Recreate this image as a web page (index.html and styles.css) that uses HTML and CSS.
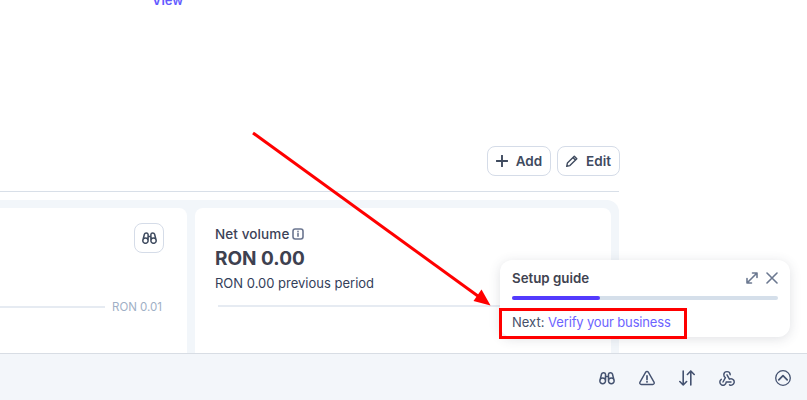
FILE: index.html
```html
<!DOCTYPE html>
<html lang="en">
<head>
  <meta charset="UTF-8">
  <title>Dashboard</title>
  <link rel="stylesheet" href="styles.css">
</head>
<body>
  <div class="page">
    <main class="main">
      <a class="view-link">View</a>

      <div class="toolbar">
        <button class="btn">
          <svg class="btn-icon" viewBox="0 0 12 12"><path d="M6 .5v11M.5 6h11" stroke-width="1.9"/></svg>
          Add
        </button>
        <button class="btn">
          <svg class="btn-icon" viewBox="0 0 12 12"><path d="M8.3 1.2l2.5 2.5-6.9 6.9-3.2.7.7-3.2zM6.9 2.6l2.5 2.5" stroke-width="1.4"/></svg>
          Edit
        </button>
      </div>

      <div class="cards">
        <section class="card card-left">
          <button class="icon-btn">
            <svg class="binoculars" viewBox="0.5 0 15 12"><path d="M1.3 8.5L2.9 2.2C3.4.6 6.3.6 6.6 2.4v6.2M14.7 8.5l-1.6-6.3C12.6.6 9.7.6 9.4 2.4v6.2M6.6 4.5h2.8M6.6 8.7a2.65 2.65 0 1 1-5.3 0 2.65 2.65 0 0 1 5.3 0zM14.7 8.7a2.65 2.65 0 1 1-5.3 0 2.65 2.65 0 0 1 5.3 0z" stroke-width="1.5"/></svg>
          </button>
          <div class="axis-row">
            <span class="axis-line"></span>
            <span class="axis-label">RON 0.01</span>
          </div>
        </section>

        <section class="card card-right">
          <h3 class="card-title">
            Net volume
            <svg class="info" viewBox="0 0 12 12"><rect x="1" y="1" width="10" height="10" rx="2.2" stroke-width="1.6"/><path d="M6 5.6v2.6M6 3.4v.4" stroke-width="1.6"/></svg>
          </h3>
          <div class="amount">RON 0.00</div>
          <div class="previous">RON 0.00 previous period</div>
          <div class="chart-line"></div>
        </section>
      </div>
    </main>

    <footer class="bottom-bar">
      <svg class="bar-icon" viewBox="0.5 -1 15 14"><path d="M1.3 8.5L2.9 2.2C3.4.6 6.3.6 6.6 2.4v6.2M14.7 8.5l-1.6-6.3C12.6.6 9.7.6 9.4 2.4v6.2M6.6 4.5h2.8M6.6 8.7a2.65 2.65 0 1 1-5.3 0 2.65 2.65 0 0 1 5.3 0zM14.7 8.7a2.65 2.65 0 1 1-5.3 0 2.65 2.65 0 0 1 5.3 0z" stroke-width="1.4"/></svg>
      <svg class="bar-icon" viewBox="0 0 16 16"><path d="M6.7 2.2L1 12.2c-.6 1.1.1 2.3 1.3 2.3h11.4c1.2 0 1.9-1.2 1.3-2.3L9.3 2.2c-.6-1-2-1-2.6 0z" stroke-width="1.4"/><path d="M8 5.8v3.6M8 11.6v.3" stroke-width="1.7"/></svg>
      <svg class="bar-icon" viewBox="0 0 16 16"><path d="M4.2 1v14M.8 11.5l3.4 3.5 3.4-3.5M11.8 15V1M8.4 4.5L11.8 1l3.4 3.5" stroke-width="1.6"/></svg>
      <svg class="bar-icon" viewBox="2 2 20 20"><path d="M4.876 13.61a4 4 0 1 0 6.124 3.39h6M15.066 20.502a4 4 0 1 0 1.934 -7.502c-.706 0 -1.424 .179 -2 .5l-3 -5.5M16 8a4 4 0 1 0 -8 0c0 1.506 .77 2.818 2 3.5l-3 5.5" stroke-width="1.8"/></svg>
      <svg class="bar-icon bar-icon-up" viewBox="0 0 16 16"><circle cx="8" cy="8" r="7.3" stroke-width="1.3"/><path d="M3.8 9.8L8 5.6l4.2 4.2" stroke-width="1.7"/></svg>
    </footer>
  </div>

  <!-- setup guide popup -->
  <aside class="guide">
    <div class="guide-head">
      <span class="guide-title">Setup guide</span>
      <div class="guide-actions">
        <svg class="guide-icon" viewBox="0 0 12 12"><path d="M1 11L11 1M6.5 1H11v4.5M1 6.5V11h4.5" stroke-width="1.6"/></svg>
        <svg class="guide-icon" viewBox="0 0 12 12"><path d="M1 1l10 10M11 1L1 11" stroke-width="1.6"/></svg>
      </div>
    </div>
    <div class="progress"><div class="progress-fill"></div></div>
    <div class="guide-next">Next: <a class="guide-link">Verify your business</a></div>
  </aside>

  <!-- annotation -->
  <svg class="arrow" viewBox="0 0 807 400"><path class="arrow-line" d="M253 133L482 299"/><path class="arrow-head" d="M490.5 305.5L473.5 301 481.5 289.5z"/></svg>
  <div class="red-box"></div>
</body>
</html>
```

FILE: styles.css
```css
* {
  box-sizing: border-box;
}

html, body {
  margin: 0;
  height: 400px;
  overflow: hidden;
}

body {
  font-family: Inter, "Noto Sans", sans-serif;
  background-color: #fff;
  color: #3c4257;
}

svg {
  fill: none;
  stroke: currentColor;
  stroke-linecap: round;
  stroke-linejoin: round;
}

.page {
  height: 400px;
  display: flex;
  flex-direction: column;
}

.main {
  flex: 1;
  min-height: 0;
  overflow: hidden;
  width: 620px;
}

.view-link {
  display: block;
  margin-top: -8px;
  margin-left: 152px;
  height: 154px;
  color: #635bff;
  font-size: 13px;
  line-height: 16px;
  font-weight: 600;
}

/* toolbar */
.toolbar {
  display: flex;
  justify-content: flex-end;
  gap: 6px;
  height: 46px;
  border-bottom: 1px solid #d8dfe8;
  margin-right: 1px;
}

.btn {
  display: flex;
  align-items: center;
  gap: 8px;
  height: 30px;
  padding: 0 8px;
  background-color: #fff;
  border: 1px solid #d5dce8;
  border-radius: 8px;
  color: #3f4b5f;
  font-family: inherit;
  font-size: 13.5px;
  font-weight: 600;
}

.btn:last-child {
  margin-right: -1px;
}

.btn-icon {
  width: 12px;
  height: 12px;
}

/* cards */
.cards {
  display: flex;
  gap: 8px;
  margin-top: 8px;
  margin-right: 1px;
  height: 160px;
  padding: 8px 8px 0 0;
  background-color: #f2f6fa;
  border-radius: 0 12px 0 0;
}

.card {
  background-color: #fff;
  border-radius: 8px 8px 0 0;
}

.card-left {
  width: 187px;
  padding: 15px 23px 0 0;
  border-top-left-radius: 0;
}

.icon-btn {
  display: flex;
  align-items: center;
  justify-content: center;
  width: 30px;
  height: 30px;
  margin-left: auto;
  padding: 0;
  background-color: #fff;
  border: 1px solid #d5dce8;
  border-radius: 8px;
  color: #3f4b5f;
}

.binoculars {
  width: 15px;
  height: 12px;
}

.axis-row {
  display: flex;
  align-items: center;
  gap: 7px;
  margin-top: 46px;
  margin-right: 2px;
}

.axis-line {
  flex: 1;
  height: 2px;
  background-color: #e6ebf2;
}

.axis-label {
  color: #9fb0c6;
  font-size: 11.5px;
  line-height: 16px;
}

.card-right {
  flex: 1;
  padding: 18px 20px 0;
}

.card-title {
  display: flex;
  align-items: center;
  gap: 3px;
  margin: 0;
  font-size: 13.5px;
  letter-spacing: 0.1px;
  line-height: 16px;
  font-weight: 500;
  color: #3c4257;
}

.info {
  width: 12px;
  height: 12px;
  color: #6b7690;
}

.amount {
  margin-top: 4px;
  font-size: 19px;
  line-height: 26px;
  font-weight: 700;
  color: #3e4150;
}

.previous {
  margin-top: 2px;
  font-size: 13px;
  line-height: 18px;
  color: #34405a;
}

.chart-line {
  height: 2px;
  margin-top: 13px;
  margin-left: 3px;
  background-color: #e6ebf2;
}

/* bottom bar */
.bottom-bar {
  display: flex;
  align-items: center;
  justify-content: flex-end;
  gap: 24px;
  height: 47px;
  padding: 2px 16px 0 0;
  background-color: #f3f6fa;
  border-top: 1px solid #d8dde4;
  color: #445270;
}

.bar-icon {
  width: 16px;
  height: 16px;
}

.bar-icon-up {
  margin-left: 16px;
}

/* setup guide */
.guide {
  position: absolute;
  left: 500px;
  top: 260px;
  width: 290px;
  height: 77px;
  padding: 10px 12px;
  background-color: #fff;
  border-radius: 12px;
  box-shadow: 0 2px 12px rgba(60, 66, 87, 0.16);
}

.guide-head {
  display: flex;
  align-items: center;
  justify-content: space-between;
  height: 16px;
}

.guide-title {
  font-size: 13.3px;
  font-weight: 600;
  color: #3f4350;
}

.guide-actions {
  display: flex;
  gap: 8px;
  color: #6b7890;
}

.guide-icon {
  width: 12px;
  height: 12px;
}

.progress {
  height: 4px;
  margin-top: 10px;
  border-radius: 2px;
  background-color: #d5dfea;
}

.progress-fill {
  width: 33%;
  height: 100%;
  border-radius: 2px;
  background-color: #533afd;
}

.guide-next {
  margin-top: 14px;
  font-size: 13px;
  line-height: 16px;
  color: #46506a;
}

.guide-link {
  color: #6c63ff;
  letter-spacing: -0.15px;
}

/* red annotation */
.arrow {
  position: absolute;
  left: 0;
  top: 0;
  width: 807px;
  height: 400px;
  pointer-events: none;
}

.arrow-line {
  stroke: #ff0000;
  stroke-width: 3;
  stroke-linecap: butt;
}

.arrow-head {
  fill: #ff0000;
  stroke: none;
}

.red-box {
  position: absolute;
  left: 499px;
  top: 308px;
  width: 188px;
  height: 31px;
  border: 3px solid #ff0000;
}
```
